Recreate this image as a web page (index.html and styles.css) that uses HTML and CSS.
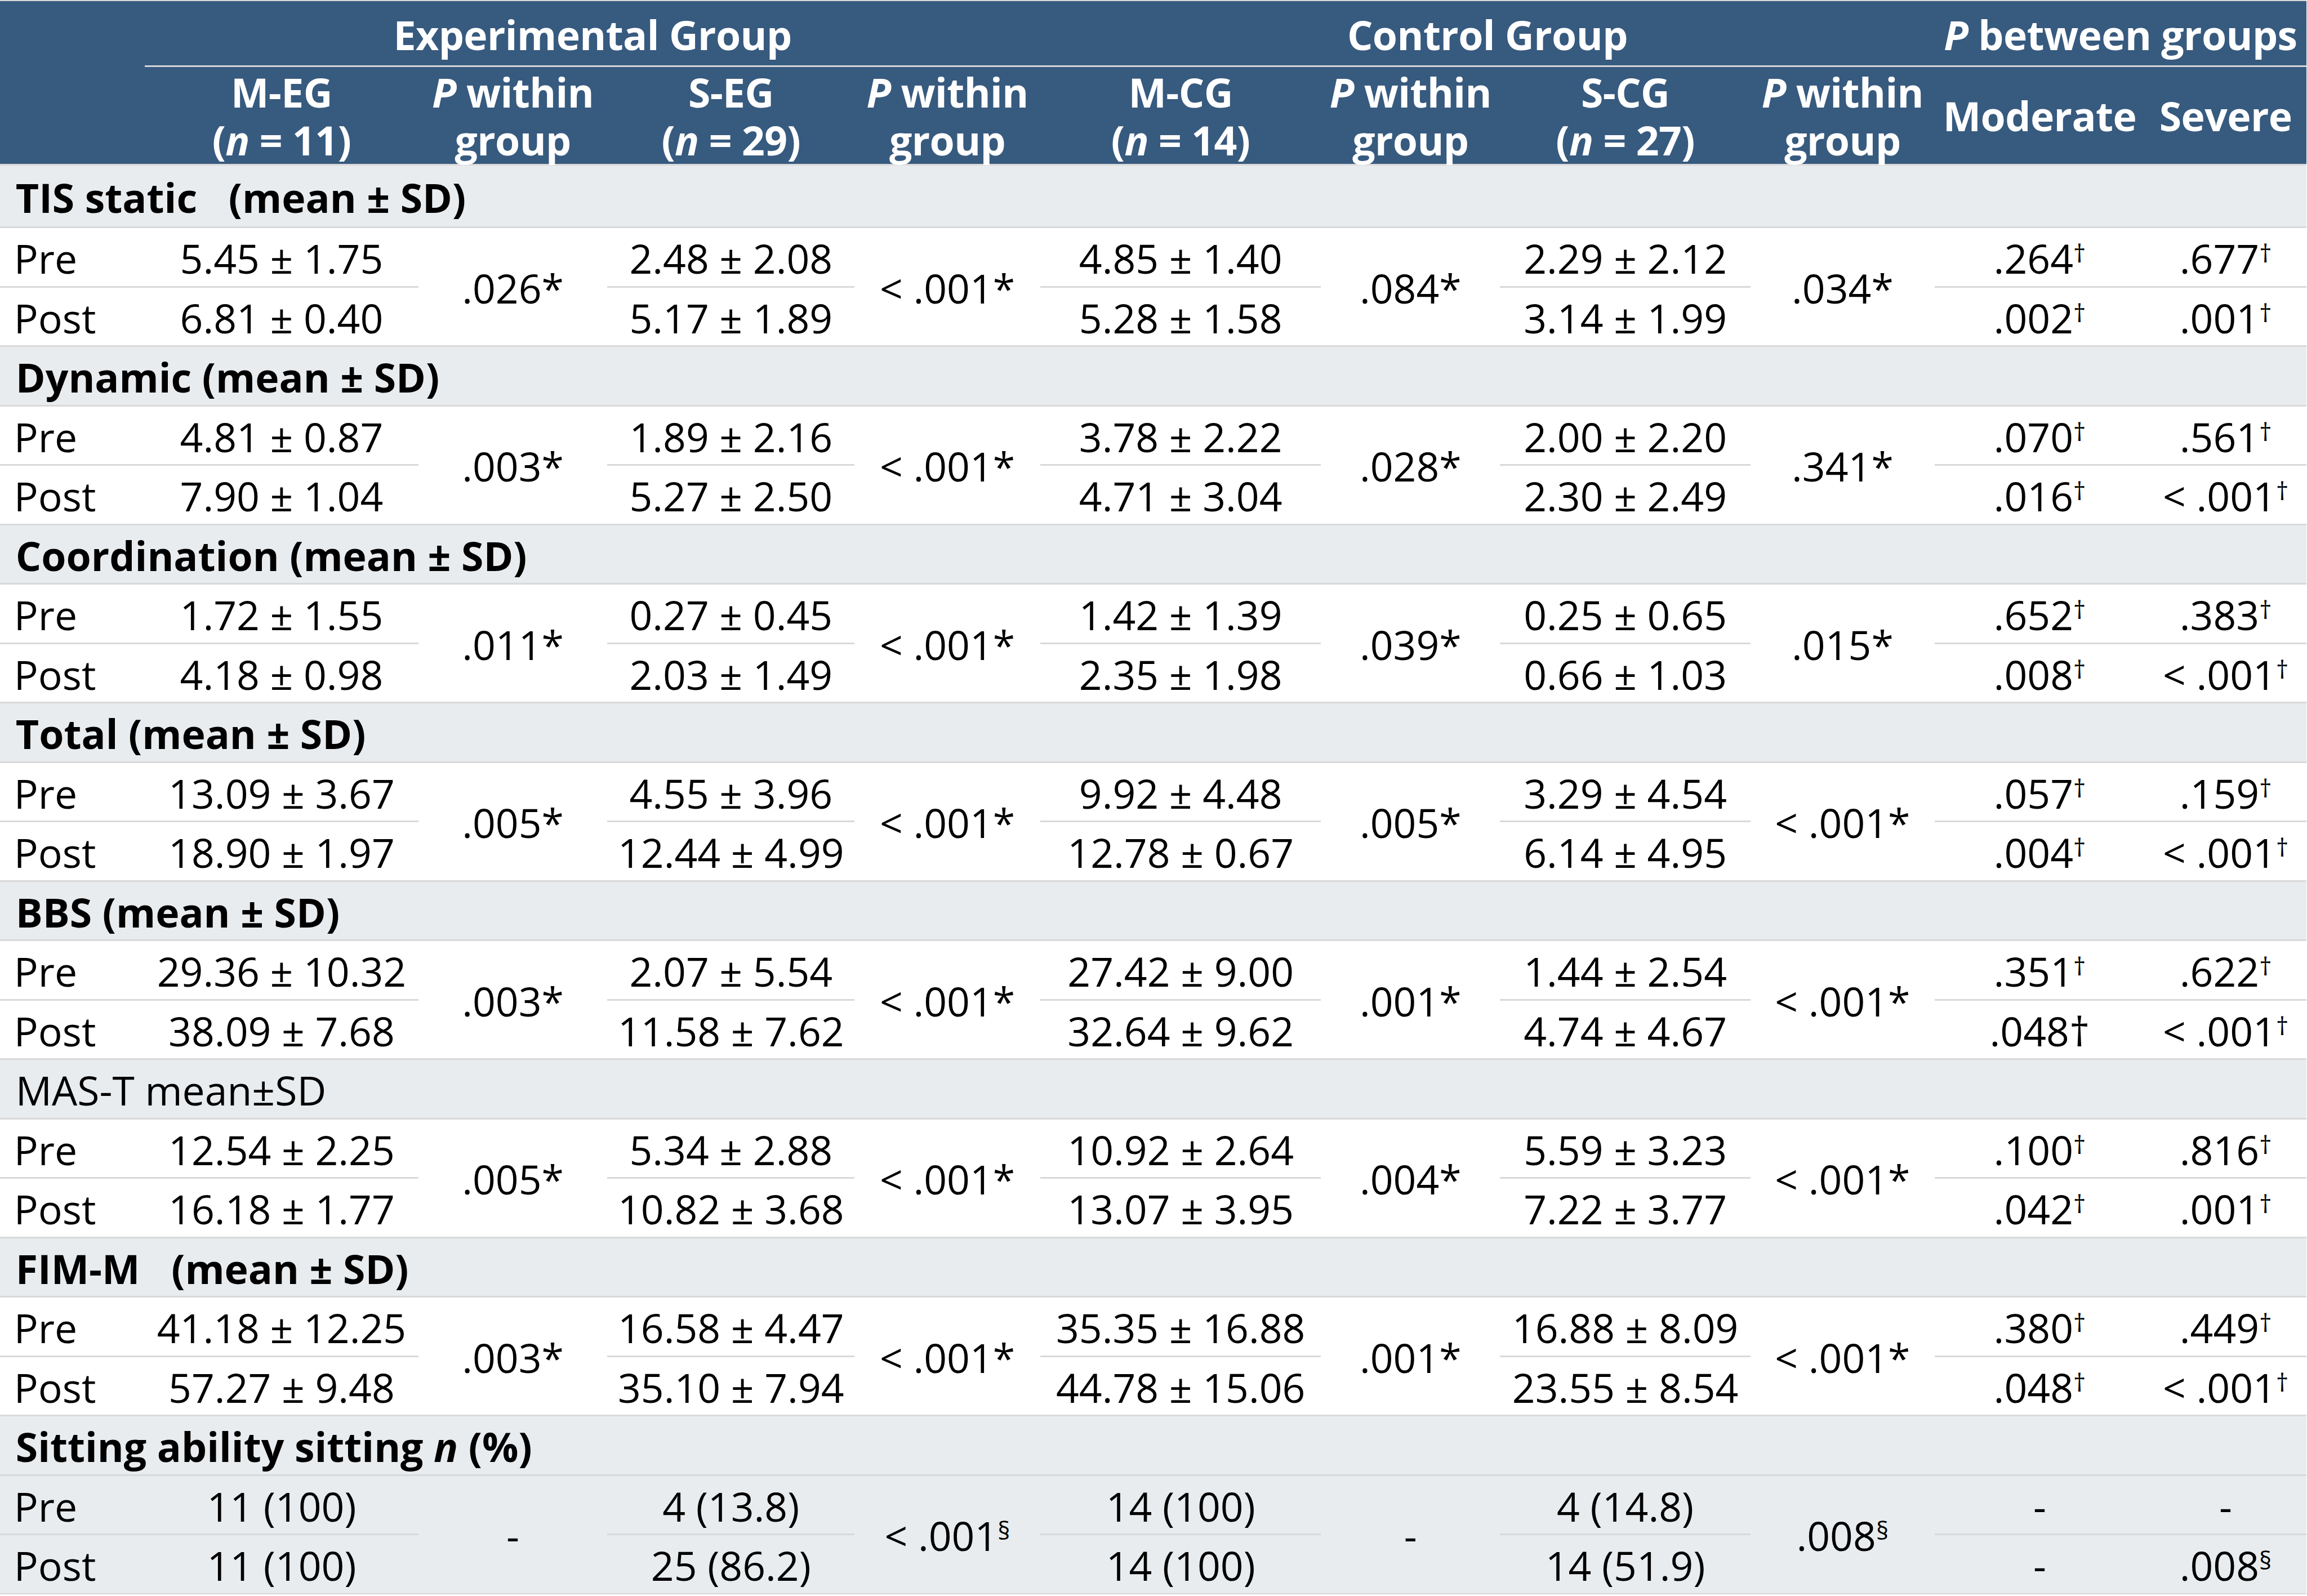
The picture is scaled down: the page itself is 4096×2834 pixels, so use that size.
FILE: index.html
```html
<!DOCTYPE html>
<html lang="en">
<head>
<meta charset="utf-8">
<title>Outcome measures table</title>
<link rel="stylesheet" href="styles.css">
</head>
<body>
<div class="page">
<table class="results">
  <colgroup>
    <col class="c-label"><col class="c-meg"><col class="c-p1"><col class="c-seg"><col class="c-p2">
    <col class="c-mcg"><col class="c-p3"><col class="c-scg"><col class="c-p4"><col class="c-mod"><col class="c-sev">
  </colgroup>
  <thead>
    <tr class="h1">
      <th rowspan="2" class="corner"></th>
      <th colspan="4" class="grp">Experimental Group</th>
      <th colspan="4" class="grp">Control Group</th>
      <th colspan="2" class="grp"><i>P</i> between groups</th>
    </tr>
    <tr class="h2">
      <th>M-EG<br>(<i>n</i> = 11)</th>
      <th><i>P</i> within<br>group</th>
      <th>S-EG<br>(<i>n</i> = 29)</th>
      <th><i>P</i> within<br>group</th>
      <th>M-CG<br>(<i>n</i> = 14)</th>
      <th><i>P</i> within<br>group</th>
      <th>S-CG<br>(<i>n</i> = 27)</th>
      <th><i>P</i> within<br>group</th>
      <th>Moderate</th>
      <th>Severe</th>
    </tr>
  </thead>
  <tbody>
    <tr class="sec first"><td colspan="11" class="sec-label">TIS static&nbsp;&nbsp; (mean ± SD)</td></tr>
    <tr><td class="lbl">Pre</td><td>5.45 ± 1.75</td><td rowspan="2">.026*</td><td>2.48 ± 2.08</td><td rowspan="2">&lt; .001*</td><td>4.85 ± 1.40</td><td rowspan="2">.084*</td><td>2.29 ± 2.12</td><td rowspan="2">.034*</td><td>.264<sup>†</sup></td><td>.677<sup>†</sup></td></tr>
    <tr><td class="lbl">Post</td><td>6.81 ± 0.40</td><td>5.17 ± 1.89</td><td>5.28 ± 1.58</td><td>3.14 ± 1.99</td><td>.002<sup>†</sup></td><td>.001<sup>†</sup></td></tr>

    <tr class="sec"><td colspan="11" class="sec-label">Dynamic (mean ± SD)</td></tr>
    <tr><td class="lbl">Pre</td><td>4.81 ± 0.87</td><td rowspan="2">.003*</td><td>1.89 ± 2.16</td><td rowspan="2">&lt; .001*</td><td>3.78 ± 2.22</td><td rowspan="2">.028*</td><td>2.00 ± 2.20</td><td rowspan="2">.341*</td><td>.070<sup>†</sup></td><td>.561<sup>†</sup></td></tr>
    <tr><td class="lbl">Post</td><td>7.90 ± 1.04</td><td>5.27 ± 2.50</td><td>4.71 ± 3.04</td><td>2.30 ± 2.49</td><td>.016<sup>†</sup></td><td>&lt; .001<sup>†</sup></td></tr>

    <tr class="sec"><td colspan="11" class="sec-label">Coordination (mean ± SD)</td></tr>
    <tr><td class="lbl">Pre</td><td>1.72 ± 1.55</td><td rowspan="2">.011*</td><td>0.27 ± 0.45</td><td rowspan="2">&lt; .001*</td><td>1.42 ± 1.39</td><td rowspan="2">.039*</td><td>0.25 ± 0.65</td><td rowspan="2">.015*</td><td>.652<sup>†</sup></td><td>.383<sup>†</sup></td></tr>
    <tr><td class="lbl">Post</td><td>4.18 ± 0.98</td><td>2.03 ± 1.49</td><td>2.35 ± 1.98</td><td>0.66 ± 1.03</td><td>.008<sup>†</sup></td><td>&lt; .001<sup>†</sup></td></tr>

    <tr class="sec"><td colspan="11" class="sec-label">Total (mean ± SD)</td></tr>
    <tr><td class="lbl">Pre</td><td>13.09 ± 3.67</td><td rowspan="2">.005*</td><td>4.55 ± 3.96</td><td rowspan="2">&lt; .001*</td><td>9.92 ± 4.48</td><td rowspan="2">.005*</td><td>3.29 ± 4.54</td><td rowspan="2">&lt; .001*</td><td>.057<sup>†</sup></td><td>.159<sup>†</sup></td></tr>
    <tr><td class="lbl">Post</td><td>18.90 ± 1.97</td><td>12.44 ± 4.99</td><td>12.78 ± 0.67</td><td>6.14 ± 4.95</td><td>.004<sup>†</sup></td><td>&lt; .001<sup>†</sup></td></tr>

    <tr class="sec"><td colspan="11" class="sec-label">BBS (mean ± SD)</td></tr>
    <tr><td class="lbl">Pre</td><td>29.36 ± 10.32</td><td rowspan="2">.003*</td><td>2.07 ± 5.54</td><td rowspan="2">&lt; .001*</td><td>27.42 ± 9.00</td><td rowspan="2">.001*</td><td>1.44 ± 2.54</td><td rowspan="2">&lt; .001*</td><td>.351<sup>†</sup></td><td>.622<sup>†</sup></td></tr>
    <tr><td class="lbl">Post</td><td>38.09 ± 7.68</td><td>11.58 ± 7.62</td><td>32.64 ± 9.62</td><td>4.74 ± 4.67</td><td>.048†</td><td>&lt; .001<sup>†</sup></td></tr>

    <tr class="sec"><td colspan="11" class="sec-label plain">MAS-T mean±SD</td></tr>
    <tr><td class="lbl">Pre</td><td>12.54 ± 2.25</td><td rowspan="2">.005*</td><td>5.34 ± 2.88</td><td rowspan="2">&lt; .001*</td><td>10.92 ± 2.64</td><td rowspan="2">.004*</td><td>5.59 ± 3.23</td><td rowspan="2">&lt; .001*</td><td>.100<sup>†</sup></td><td>.816<sup>†</sup></td></tr>
    <tr><td class="lbl">Post</td><td>16.18 ± 1.77</td><td>10.82 ± 3.68</td><td>13.07 ± 3.95</td><td>7.22 ± 3.77</td><td>.042<sup>†</sup></td><td>.001<sup>†</sup></td></tr>

    <tr class="sec"><td colspan="11" class="sec-label">FIM-M&nbsp;&nbsp; (mean ± SD)</td></tr>
    <tr><td class="lbl">Pre</td><td>41.18 ± 12.25</td><td rowspan="2">.003*</td><td>16.58 ± 4.47</td><td rowspan="2">&lt; .001*</td><td>35.35 ± 16.88</td><td rowspan="2">.001*</td><td>16.88 ± 8.09</td><td rowspan="2">&lt; .001*</td><td>.380<sup>†</sup></td><td>.449<sup>†</sup></td></tr>
    <tr><td class="lbl">Post</td><td>57.27 ± 9.48</td><td>35.10 ± 7.94</td><td>44.78 ± 15.06</td><td>23.55 ± 8.54</td><td>.048<sup>†</sup></td><td>&lt; .001<sup>†</sup></td></tr>

    <tr class="sec"><td colspan="11" class="sec-label">Sitting ability sitting <i>n</i> (%)</td></tr>
    <tr class="shaded"><td class="lbl">Pre</td><td>11 (100)</td><td rowspan="2">-</td><td>4 (13.8)</td><td rowspan="2">&lt; .001<sup>§</sup></td><td>14 (100)</td><td rowspan="2">-</td><td>4 (14.8)</td><td rowspan="2">.008<sup>§</sup></td><td>-</td><td>-</td></tr>
    <tr class="shaded"><td class="lbl">Post</td><td>11 (100)</td><td>25 (86.2)</td><td>14 (100)</td><td>14 (51.9)</td><td>-</td><td>.008<sup>§</sup></td></tr>
  </tbody>
</table>
</div>
</body>
</html>
```

FILE: styles.css
```css
html, body {
  margin: 0;
  padding: 0;
  background: #ffffff;
}

.page {
  zoom: 0.993;
  width: 4124px;
}

.results {
  width: 4124px;
  table-layout: fixed;
  border-collapse: separate;
  border-spacing: 0;
  border-top: 3px solid #d9d9d9;
  border-bottom: 3px solid #d9d9d9;
  font-family: "Open Sans", "Noto Sans", "DejaVu Sans", sans-serif;
  font-size: 72px;
  line-height: 87px;
  color: #000000;
}

.c-label { width: 259px; }
.c-meg { width: 489px; }
.c-p1 { width: 338px; }
.c-seg { width: 442px; }
.c-p2 { width: 332px; }
.c-mcg { width: 502px; }
.c-p3 { width: 320px; }
.c-scg { width: 448px; }
.c-p4 { width: 329px; }
.c-mod { width: 376px; }
.c-sev { width: 289px; }

.results th {
  background: #375a7f;
  color: #ffffff;
  font-weight: 700;
  padding: 6px 0 0 0;
  text-align: center;
  vertical-align: middle;
  white-space: nowrap;
  letter-spacing: -0.6px;
}

.results tr.h1 { height: 118px; }
.results tr.h2 { height: 173px; }

.results tr.h2 th {
  padding-top: 3px;
  line-height: 85px;
}

.results th.grp {
  border-bottom: 4px solid #d3d5d8;
}

.results td {
  padding: 6px 0 0 0;
  text-align: center;
  vertical-align: middle;
  white-space: nowrap;
  border-top: 4px solid #d9d9d9;
  background: #ffffff;
}

.results tbody tr { height: 106.25px; }
.results tbody tr.first { height: 112px; }

.results td.lbl {
  text-align: left;
  padding-left: 25px;
}

.results tr.sec td,
.results tr.shaded td {
  background: #e8ecef;
}

.results td.sec-label {
  text-align: left;
  padding-left: 28px;
  font-weight: 700;
}

.results td.sec-label.plain {
  font-weight: 400;
}

.results sup {
  font-size: 44px;
  line-height: 0;
  vertical-align: 20px;
}
```
